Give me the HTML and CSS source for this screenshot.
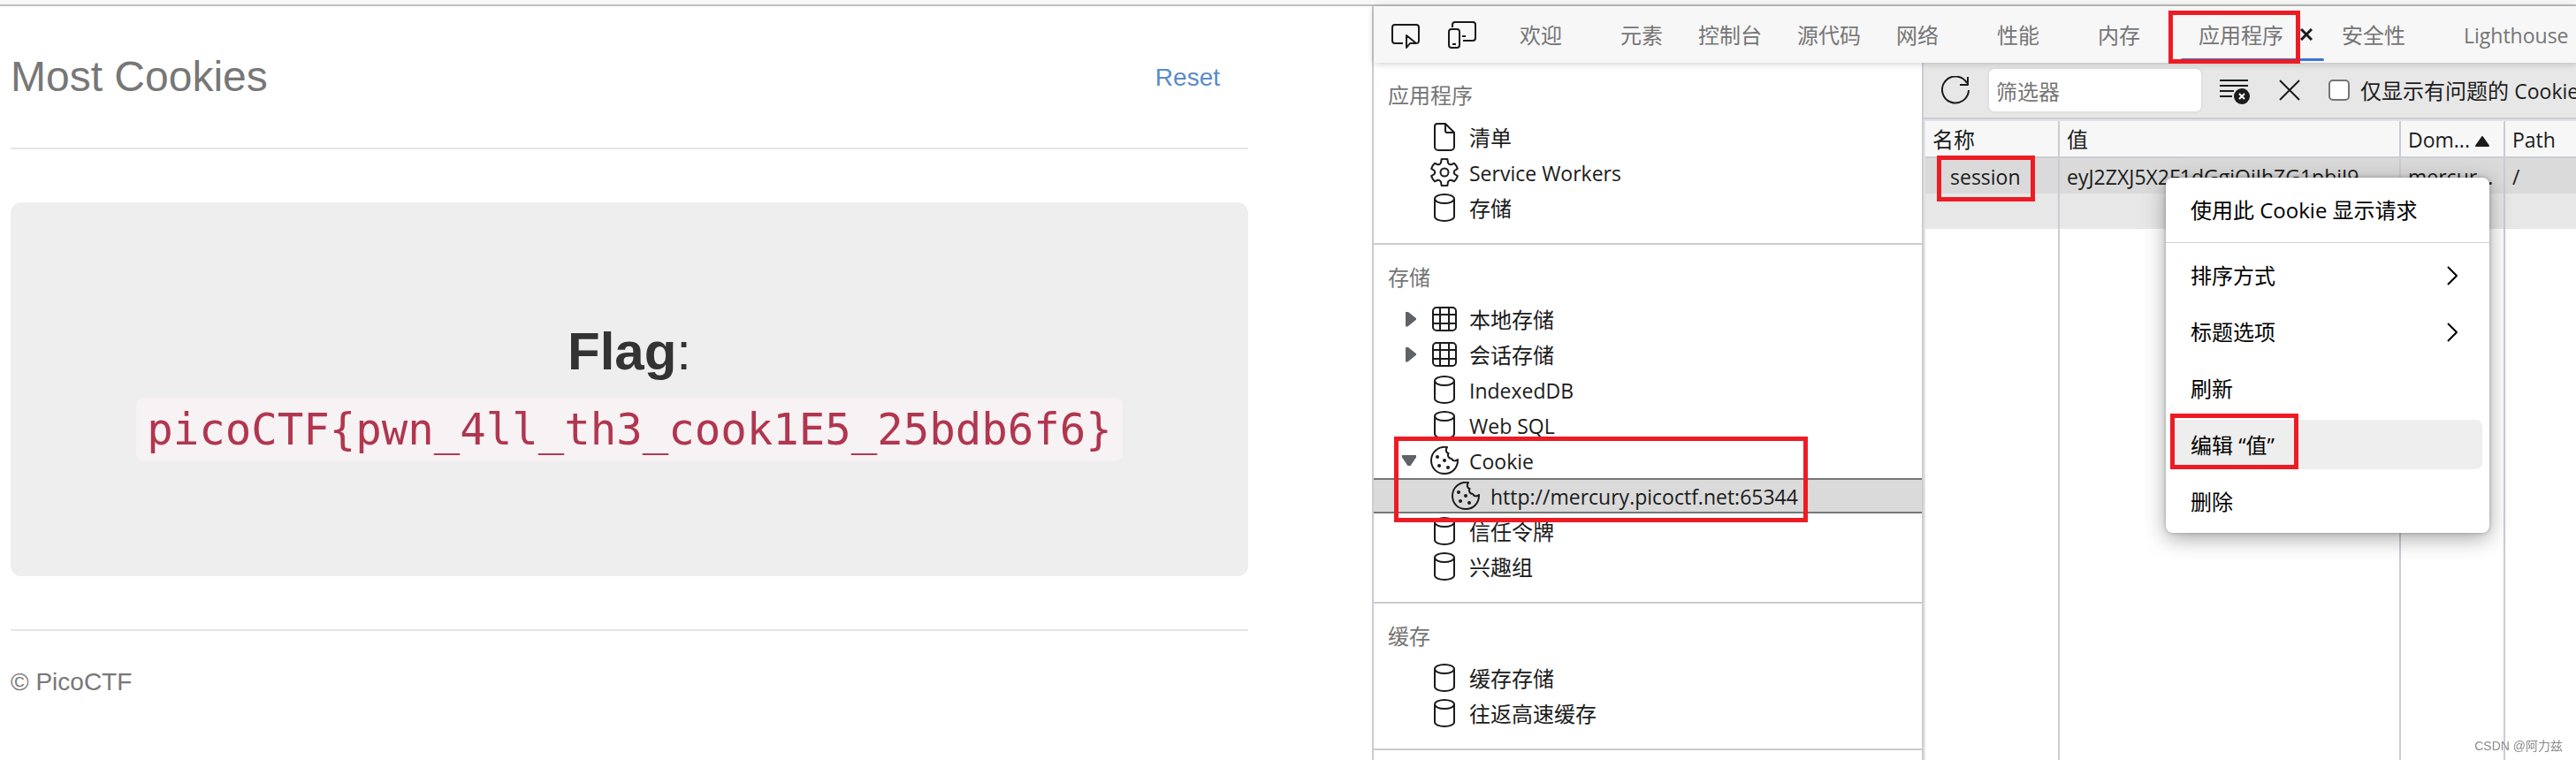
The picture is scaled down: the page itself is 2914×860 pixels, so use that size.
FILE: index.html
```html
<!DOCTYPE html>
<html lang="zh-CN">
<head>
    <meta charset="UTF-8">
    <meta name="viewport" content="width=device-width, initial-scale=1.0">
    <title>Most Cookies</title>
    <link rel="stylesheet" href="styles.css">
</head>
<body>

    <!-- Shared icons -->
    <svg class="sprite" aria-hidden="true">
        <symbol id="icon-file" viewBox="0 0 32 32">
            <path d="M8 1h9l10 10v16a4 4 0 0 1-4 4H9a4 4 0 0 1-4-4V4a3 3 0 0 1 3-3zM17 1v8a2 2 0 0 0 2 2h8"/>
        </symbol>
        <symbol id="icon-gear" viewBox="0 0 32 32">
            <path d="M12.6 1.2C14.5.6 17.5.6 19.4 1.2L20 5.2Q21.5 7.6 23.5 7.2L27 5.8Q29.9 8.5 30.8 11.8L27.5 14Q26 16 27.5 18L30.8 20.2Q29.9 23.5 27 26.2L23.5 24.8Q21.5 24.4 20 26.8L19.4 30.8C17.5 31.4 14.5 31.4 12.6 30.8L12 26.8Q10.5 24.4 8.5 24.8L5 26.2Q2.100 23.5 1.200 20.2L4.500 18Q6 16 4.500 14L1.200 11.8Q2.100 8.5 5 5.8L8.5 7.2Q10.5 7.6 12 5.2z"/>
            <circle cx="16" cy="16" r="4.5"/>
        </symbol>
        <symbol id="icon-db" viewBox="0 0 32 32">
            <ellipse cx="16" cy="6" rx="11" ry="5"/>
            <path d="M5 6v20c0 3 5 5 11 5s11-2 11-5V6"/>
        </symbol>
        <symbol id="icon-grid" viewBox="0 0 32 32">
            <rect x="3" y="3" width="26" height="26" rx="4"/>
            <path d="M11 3v26M21 3v26M3 11h26M3 21h26"/>
        </symbol>
        <symbol id="icon-cookie" viewBox="0 0 32 32">
            <path d="M19 1C9-.5 1 7 1 16s6.500 15 15 15 15-6.500 15-15v-1c-2 2-5.500 2-7-1-3 0-5-3-3.500-6-3-1-3.500-4-1.500-7z"/>
            <g class="dots"><circle cx="8" cy="12" r="2"/><circle cx="16" cy="16" r="2"/><circle cx="10" cy="22" r="2"/><circle cx="20" cy="24" r="2"/></g>
        </symbol>
        <symbol id="icon-chevron" viewBox="0 0 12 22">
            <path d="M1 1l10 10L1 21"/>
        </symbol>
    </svg>

    <div class="window-edge"></div>

    <div class="browser">

        <!-- Challenge page -->
        <main class="site">
            <header class="site-header">
                <h3>Most Cookies</h3>
                <a href="#reset">Reset</a>
            </header>
            <div class="jumbotron">
                <p><b>Flag</b>:</p>
                <code>picoCTF{pwn_4ll_th3_cook1E5_25bdb6f6}</code>
            </div>
            <footer class="site-footer">
                <p>© PicoCTF</p>
            </footer>
        </main>

        <!-- Developer tools -->
        <section class="devtools">
            <nav class="tabs">
                <button class="tool" aria-label="检查">
                    <svg class="icon" viewBox="0 0 32 32"><path d="M13 26H4a3 3 0 0 1-3-3V8a3 3 0 0 1 3-3h24a3 3 0 0 1 3 3v15a3 3 0 0 1-2 3M17 17v14l4-5h7z"/></svg>
                </button>
                <button class="tool" aria-label="设备仿真">
                    <svg class="icon" viewBox="0 0 32 32"><rect x="1" y="10" width="12" height="21" rx="3"/><path d="M5 27h4M5 8V5a3 3 0 0 1 3-3h20a3 3 0 0 1 3 3v15a3 3 0 0 1-3 3H17M16 18h4"/></svg>
                </button>
                <button class="tab closable">欢迎</button>
                <button class="tab">元素</button>
                <button class="tab">控制台</button>
                <button class="tab">源代码</button>
                <button class="tab closable">网络</button>
                <button class="tab closable">性能</button>
                <button class="tab closable">内存</button>
                <button class="tab active">应用程序
                    <svg class="tab-close" viewBox="0 0 14 14"><path d="M1 1l12 12M13 1L1 13"/></svg>
                    <span class="mark mark-tab"></span>
                </button>
                <button class="tab closable">安全性</button>
                <button class="tab closable latin">Lighthouse</button>
            </nav>

            <div class="panel">
                <aside class="sidebar">
                    <section class="group">
                        <h4>应用程序</h4>
                        <ul>
                            <li><svg class="icon"><use href="#icon-file"/></svg><span>清单</span></li>
                            <li><svg class="icon"><use href="#icon-gear"/></svg><span class="latin">Service Workers</span></li>
                            <li><svg class="icon"><use href="#icon-db"/></svg><span>存储</span></li>
                        </ul>
                    </section>
                    <section class="group">
                        <h4>存储</h4>
                        <ul>
                            <li class="closed"><svg class="icon"><use href="#icon-grid"/></svg><span>本地存储</span></li>
                            <li class="closed"><svg class="icon"><use href="#icon-grid"/></svg><span>会话存储</span></li>
                            <li><svg class="icon"><use href="#icon-db"/></svg><span class="latin">IndexedDB</span></li>
                            <li><svg class="icon"><use href="#icon-db"/></svg><span class="latin">Web SQL</span></li>
                            <li class="open"><svg class="icon"><use href="#icon-cookie"/></svg><span class="latin">Cookie</span><span class="mark mark-cookie"></span></li>
                            <li class="child selected"><svg class="icon"><use href="#icon-cookie"/></svg><span class="latin">http://mercury.picoctf.net:65344</span></li>
                            <li><svg class="icon"><use href="#icon-db"/></svg><span>信任令牌</span></li>
                            <li><svg class="icon"><use href="#icon-db"/></svg><span>兴趣组</span></li>
                        </ul>
                    </section>
                    <section class="group">
                        <h4>缓存</h4>
                        <ul>
                            <li><svg class="icon"><use href="#icon-db"/></svg><span>缓存存储</span></li>
                            <li><svg class="icon"><use href="#icon-db"/></svg><span>往返高速缓存</span></li>
                        </ul>
                    </section>
                </aside>

                <div class="cookies">
                    <div class="filter-bar">
                        <button aria-label="刷新">
                            <svg class="icon" viewBox="0 0 32 32"><path d="M29 8A15 15 0 1 0 31 16M30 1v9h-9"/></svg>
                        </button>
                        <input type="text" class="filter" placeholder="筛选器" aria-label="筛选器">
                        <button aria-label="全部清除">
                            <svg class="icon clear-icon" viewBox="0 0 36 32"><path d="M1 5h32M1 11h32M1 17h16M1 23h14"/><circle cx="26" cy="23" r="9"/><path class="cross" d="M23 20l6 6M29 20l-6 6"/></svg>
                        </button>
                        <button aria-label="删除所选">
                            <svg class="icon delete-icon" viewBox="0 0 24 24"><path d="M1 1l22 22M23 1L1 23"/></svg>
                        </button>
                        <label class="issues"><input type="checkbox"><span>仅显示有问题的 <span class="latin">Cookie</span></span></label>
                    </div>

                    <div class="grid-area">
                        <table>
                            <colgroup>
                                <col class="col-name">
                                <col class="col-value">
                                <col class="col-domain">
                                <col>
                            </colgroup>
                            <thead>
                                <tr>
                                    <th>名称</th>
                                    <th>值</th>
                                    <th class="latin">Dom...<svg class="sort" viewBox="0 0 16 12"><path d="M8 1l7 10H1z"/></svg></th>
                                    <th class="latin">Path</th>
                                </tr>
                            </thead>
                            <tbody class="latin">
                                <tr class="current">
                                    <td class="name">session<span class="mark mark-session"></span></td>
                                    <td>eyJ2ZXJ5X2F1dGgiOiJhZG1pbiJ9</td>
                                    <td>mercur...</td>
                                    <td>/</td>
                                </tr>
                                <tr class="blank"><td></td><td></td><td></td><td></td></tr>
                                <tr class="rest"><td></td><td></td><td></td><td></td></tr>
                            </tbody>
                        </table>

                        <!-- Context menu of the session row -->
                        <div class="menu">
                            <button>使用此 Cookie 显示请求</button>
                            <hr>
                            <button>排序方式<svg class="chevron"><use href="#icon-chevron"/></svg></button>
                            <button>标题选项<svg class="chevron"><use href="#icon-chevron"/></svg></button>
                            <button>刷新</button>
                            <button class="hovered">编辑 “值”<span class="mark mark-edit"></span></button>
                            <button>删除</button>
                        </div>
                    </div>
                </div>
            </div>
        </section>
    </div>

    <div class="watermark">CSDN @阿力兹</div>

</body>
</html>
```
FILE: styles.css
```css
* {
    box-sizing: border-box;
}
body {
    display: flex;
    flex-direction: column;
    height: 100vh;
    margin: 0;
    overflow: hidden;
    background-color: #fff;
    color: #1b1b1b;
    font-family: "Open Sans", "Noto Sans CJK SC", sans-serif;
    font-size: 24px;
}
button {
    position: relative;
    padding: 0;
    border: none;
    background: none;
    color: inherit;
    font: inherit;
    white-space: nowrap;
}
h3, h4, p, ul {
    margin: 0;
    padding: 0;
    font-weight: normal;
    list-style: none;
}
.latin {
    font-size: 23px;
}
.sprite {
    position: absolute;
    width: 0;
    height: 0;
}
.icon {
    display: block;
    flex: none;
    width: 32px;
    height: 32px;
    fill: none;
    stroke: #1b1b1b;
    stroke-width: 2;
    stroke-linejoin: round;
}
.dots {
    fill: #1b1b1b;
    stroke: none;
}
.window-edge {
    flex: none;
    height: 7px;
    border-bottom: 2px solid #bfbfbf;
    background-color: #f7f7f7;
}
.browser {
    display: grid;
    grid-template-columns: 1552fr 1362fr;
    flex: 1;
    min-height: 0;
}

/* Challenge page */
.site {
    min-width: 0;
    padding: 0 140px 0 12px;
    font-family: "Liberation Sans", Arial, sans-serif;
    font-size: 28px;
    line-height: 40px;
}
.site-header {
    display: flex;
    align-items: center;
    justify-content: space-between;
    height: 162px;
    padding-right: 32px;
    border-bottom: 2px solid #e5e5e5;
    color: #777;
}
.site-header h3 {
    font-size: 48px;
}
.site-header a {
    padding-top: 2px;
    color: #5a8bc9;
    text-decoration: none;
}
.jumbotron {
    margin: 60px 0;
    padding: 134px 60px 130px;
    border-radius: 12px;
    background-color: #eee;
    color: #333;
    font-size: 60px;
    text-align: center;
}
.jumbotron p {
    line-height: 70px;
}
.jumbotron code {
    display: inline-block;
    margin-top: 17px;
    padding: 2px 12px 0;
    border-radius: 8px;
    background-color: #f7f2f4;
    color: #b1364f;
    font-family: "DejaVu Sans Mono", monospace;
    font-size: 49px;
    line-height: 70px;
    vertical-align: top;
}
.site-footer {
    padding-top: 38px;
    border-top: 2px solid #e5e5e5;
    color: #777;
}

/* Developer tools */
.devtools {
    display: flex;
    flex-direction: column;
    min-width: 0;
    border-left: 2px solid #cbccd0;
}
.tabs {
    position: relative;
    z-index: 1;
    display: flex;
    align-items: center;
    height: 64px;
    padding-left: 20px;
    background-color: #f7f7f7;
    box-shadow: 0 1px 8px rgba(0, 0, 0, 0.2);
    color: #757575;
}
.tool {
    margin-right: 32px;
}
.tab {
    flex: none;
    height: 64px;
    padding: 2px 20px 0;
    line-height: 34px;
}
.tool + .tab {
    padding-left: 17px;
}
.closable, .active {
    padding-right: 46px;
}
.active::after {
    content: "";
    position: absolute;
    right: 0;
    bottom: 2px;
    left: 0;
    height: 3px;
    border-radius: 2px;
    background-color: #3b76d6;
}
.tab-close {
    position: absolute;
    top: 25px;
    right: 13px;
    width: 14px;
    height: 14px;
    stroke: #1b1b1b;
    stroke-width: 3;
}
.panel {
    display: flex;
    flex: 1;
    min-height: 0;
}
.sidebar {
    flex: none;
    width: 622px;
    border-right: 2px solid #cbccd4;
}
.group {
    padding-bottom: 20px;
    border-bottom: 2px solid #cbccd0;
}
.group h4 {
    height: 64px;
    padding: 20px 16px 0;
    color: #757575;
    font-size: 24px;
    line-height: 34px;
}
.group li {
    position: relative;
    display: flex;
    align-items: center;
    gap: 12px;
    height: 40px;
    padding-left: 64px;
    line-height: 34px;
}
.group li span {
    padding-top: 2px;
}
.group .child {
    padding-left: 88px;
}
.group .selected {
    border: solid #757875;
    border-width: 2px 0;
    background-color: #dadada;
}
.closed::before, .open::before {
    content: "";
    position: absolute;
    left: 36px;
    width: 12px;
    height: 17px;
    background-color: #5f6368;
    clip-path: polygon(0 0, 20% 0, 100% 45%, 100% 55%, 20% 100%, 0 100%);
}
.open::before {
    left: 32px;
    width: 16px;
    height: 12px;
    clip-path: polygon(0 0, 100% 0, 100% 20%, 60% 100%, 40% 100%, 0 20%);
}

/* Cookie list */
.cookies {
    display: flex;
    flex: 1;
    flex-direction: column;
    min-width: 0;
}
.filter-bar {
    display: flex;
    align-items: center;
    height: 64px;
    padding-left: 20px;
    border-bottom: 2px solid #cbccd4;
    background-color: #e7e7e7;
    white-space: nowrap;
}
.filter {
    width: 244px;
    height: 52px;
    margin: 0 18px 0 20px;
    padding: 2px 8px 0;
    border: 2px solid #e0e0e0;
    border-radius: 8px;
    background-color: #fff;
    font: inherit;
}
.filter::placeholder {
    color: #757575;
}
.clear-icon {
    width: 36px;
}
.clear-icon circle {
    fill: #1b1b1b;
    stroke: none;
}
.clear-icon .cross {
    stroke: #fff;
}
.delete-icon {
    width: 24px;
    height: 24px;
    margin: 0 32px;
}
.issues {
    display: flex;
    align-items: center;
    line-height: 34px;
}
.issues input {
    appearance: none;
    width: 24px;
    height: 24px;
    margin: 0 12px 0 0;
    border: 2px solid #757575;
    border-radius: 5px;
    background-color: #fff;
}
.issues > span {
    padding-top: 2px;
}
.grid-area {
    position: relative;
    flex: 1;
    border: solid #e2e2e6;
    border-width: 2px 0 0 2px;
}
table {
    width: 100%;
    height: 100%;
    table-layout: fixed;
    border-collapse: separate;
    border-spacing: 0;
}
.col-name {
    width: 152px;
}
.col-value {
    width: 386px;
}
.col-domain {
    width: 118px;
}
th, td {
    height: 40px;
    padding: 2px 8px 0;
    border-right: 2px solid #cbccd4;
    font-weight: normal;
    line-height: 36px;
    text-align: left;
    white-space: nowrap;
}
th:last-child, td:last-child {
    border-right: none;
}
th {
    height: 42px;
    border-bottom: 2px solid #cbccd4;
    background-color: #f7f7f7;
}
.sort {
    width: 16px;
    height: 12px;
    margin-left: 6px;
    vertical-align: 1px;
    fill: #1b1b1b;
    stroke: #1b1b1b;
    stroke-width: 2;
    stroke-linejoin: round;
}
.current {
    background-color: #dadada;
}
.blank {
    background-color: #e7e7e7;
}
.rest td {
    height: auto;
}
.name {
    position: relative;
    padding-left: 28px;
}

/* Context menu */
.menu {
    position: absolute;
    top: 64px;
    left: 272px;
    width: 366px;
    padding-top: 8px;
    border-radius: 8px;
    background-color: #fff;
    box-shadow: 0 6px 24px rgba(0, 0, 0, 0.35), 0 0 4px rgba(0, 0, 0, 0.25);
    color: #000;
}
.menu::after {
    content: "";
    display: table;
}
.menu button {
    display: flex;
    align-items: center;
    width: 350px;
    height: 56px;
    margin: 0 8px 8px;
    padding: 2px 28px 0 20px;
    border-radius: 8px;
    line-height: 34px;
    white-space: pre;
}
.menu hr {
    height: 1px;
    margin: 9px 0 8px;
    border: none;
    background-color: #d4d4d4;
}
.menu .hovered {
    background-color: #eee;
}
.chevron {
    width: 12px;
    height: 22px;
    margin-left: auto;
    fill: none;
    stroke: #000;
    stroke-width: 2;
}

/* Red highlight frames */
.mark {
    position: absolute;
    z-index: 2;
    border: 5px solid #ed1c24;
}
.mark-tab {
    top: 5px;
    right: 27px;
    bottom: -1px;
    left: -14px;
}
.mark-cookie {
    top: -7px;
    left: 23px;
    width: 468px;
    height: 97px;
}
.mark-session {
    top: -3px;
    left: 13px;
    width: 111px;
    height: 52px;
}
.mark-edit {
    top: -7px;
    left: -3px;
    width: 145px;
    height: 63px;
}

.watermark {
    position: fixed;
    right: 15px;
    bottom: 6px;
    color: #8a8a8a;
    font-family: "Liberation Sans", "Noto Sans CJK SC", sans-serif;
    font-size: 14px;
    line-height: 20px;
    text-shadow: -1px -1px 0 #fff;
}
```
